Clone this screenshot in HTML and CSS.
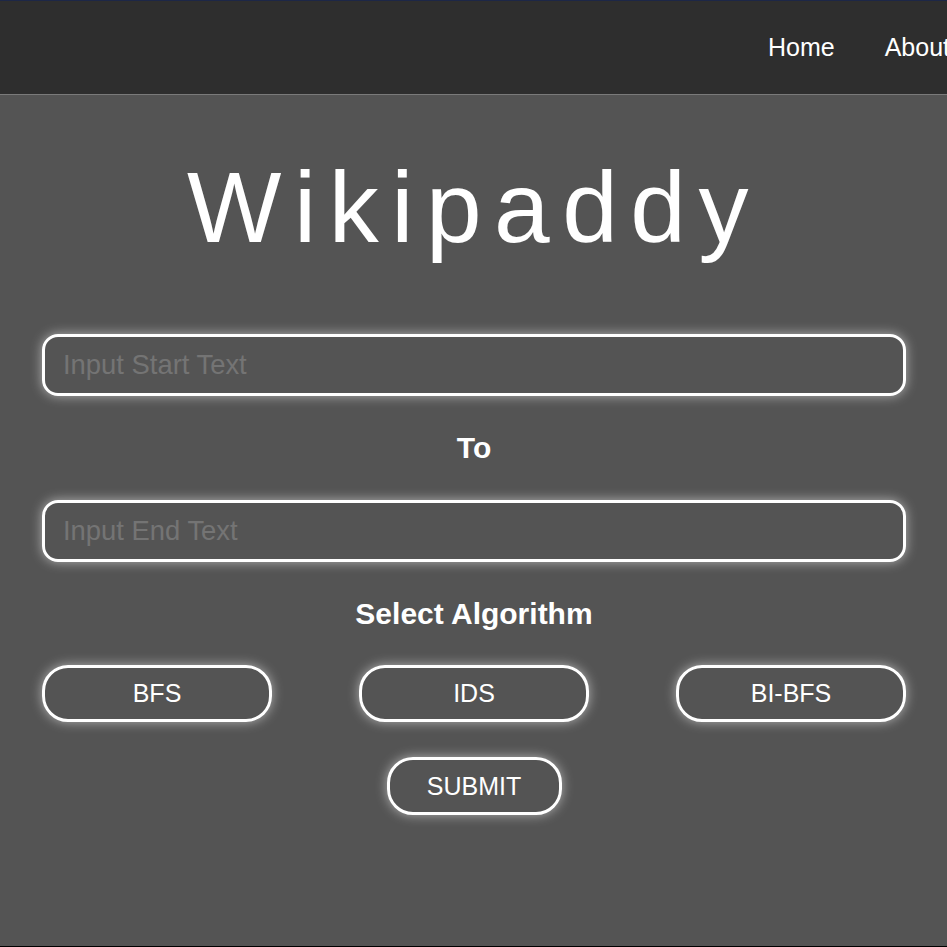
FILE: index.html
```html
<!DOCTYPE html>
<html lang="en">
<head>
<meta charset="utf-8">
<title>Wikipaddy</title>
<link rel="stylesheet" href="styles.css">
</head>
<body>
<nav class="navbar">
  <a class="nav-link" href="#">Home</a>
  <a class="nav-link" href="#">About</a>
</nav>
<main class="main">
  <h1 class="title">Wikipaddy</h1>
  <input class="text-input" type="text" placeholder="Input Start Text">
  <div class="label">To</div>
  <input class="text-input" type="text" placeholder="Input End Text">
  <div class="label">Select Algorithm</div>
  <div class="algo-row">
    <button class="pill algo">BFS</button>
    <button class="pill algo">IDS</button>
    <button class="pill algo">BI-BFS</button>
  </div>
  <button class="pill submit">SUBMIT</button>
</main>
</body>
</html>
```

FILE: styles.css
```css
html, body {
  margin: 0;
  padding: 0;
}
body {
  background: #545454;
  font-family: "Liberation Sans", Arial, sans-serif;
  color: #ffffff;
  height: 947px;
  box-sizing: border-box;
  border-bottom: 1px solid #000;
  overflow: hidden;
}
.navbar {
  height: 93px;
  background: #2e2e2e;
  border-top: 1px solid #1d2747;
  border-bottom: 1px solid #7a7a7a;
  display: flex;
  align-items: center;
  justify-content: flex-end;
  gap: 50px;
  overflow: hidden;
  white-space: nowrap;
}
.nav-link {
  color: #ffffff;
  text-decoration: none;
  font-size: 25px;
  line-height: 1;
  flex: none;
}
.nav-link:last-child {
  margin-right: -3px;
}
.main {
  display: flex;
  flex-direction: column;
  align-items: center;
  padding: 0 41px 0 42px;
}
.title {
  margin: 62px 0 0 0;
  font-size: 100px;
  font-weight: normal;
  line-height: 1;
  letter-spacing: 12.5px;
  height: 100px;
}
.text-input {
  box-sizing: border-box;
  width: 100%;
  height: 62px;
  margin-top: 77px;
  border: 3px solid #ffffff;
  border-radius: 16px;
  background: transparent;
  color: #ffffff;
  font-family: "Liberation Sans", Arial, sans-serif;
  font-size: 27.4px;
  padding: 0 18px;
  box-shadow: 0 0 12px rgba(255, 255, 255, 0.55);
  outline: none;
}
.label + .text-input {
  margin-top: 37px;
}
.text-input::placeholder {
  color: #747474;
}
.label {
  margin-top: 37px;
  font-size: 30px;
  font-weight: bold;
  line-height: 1;
}
.algo-row {
  width: 100%;
  display: flex;
  justify-content: space-between;
  margin-top: 36px;
}
.pill {
  box-sizing: border-box;
  height: 57px;
  border: 3px solid #ffffff;
  border-radius: 26px;
  background: transparent;
  color: #ffffff;
  font-family: "Liberation Sans", Arial, sans-serif;
  font-size: 25px;
  box-shadow: 0 0 12px rgba(255, 255, 255, 0.55);
  padding: 0;
}
.algo {
  width: 230px;
}
.submit {
  width: 175px;
  height: 58px;
  margin-top: 35px;
}
```
